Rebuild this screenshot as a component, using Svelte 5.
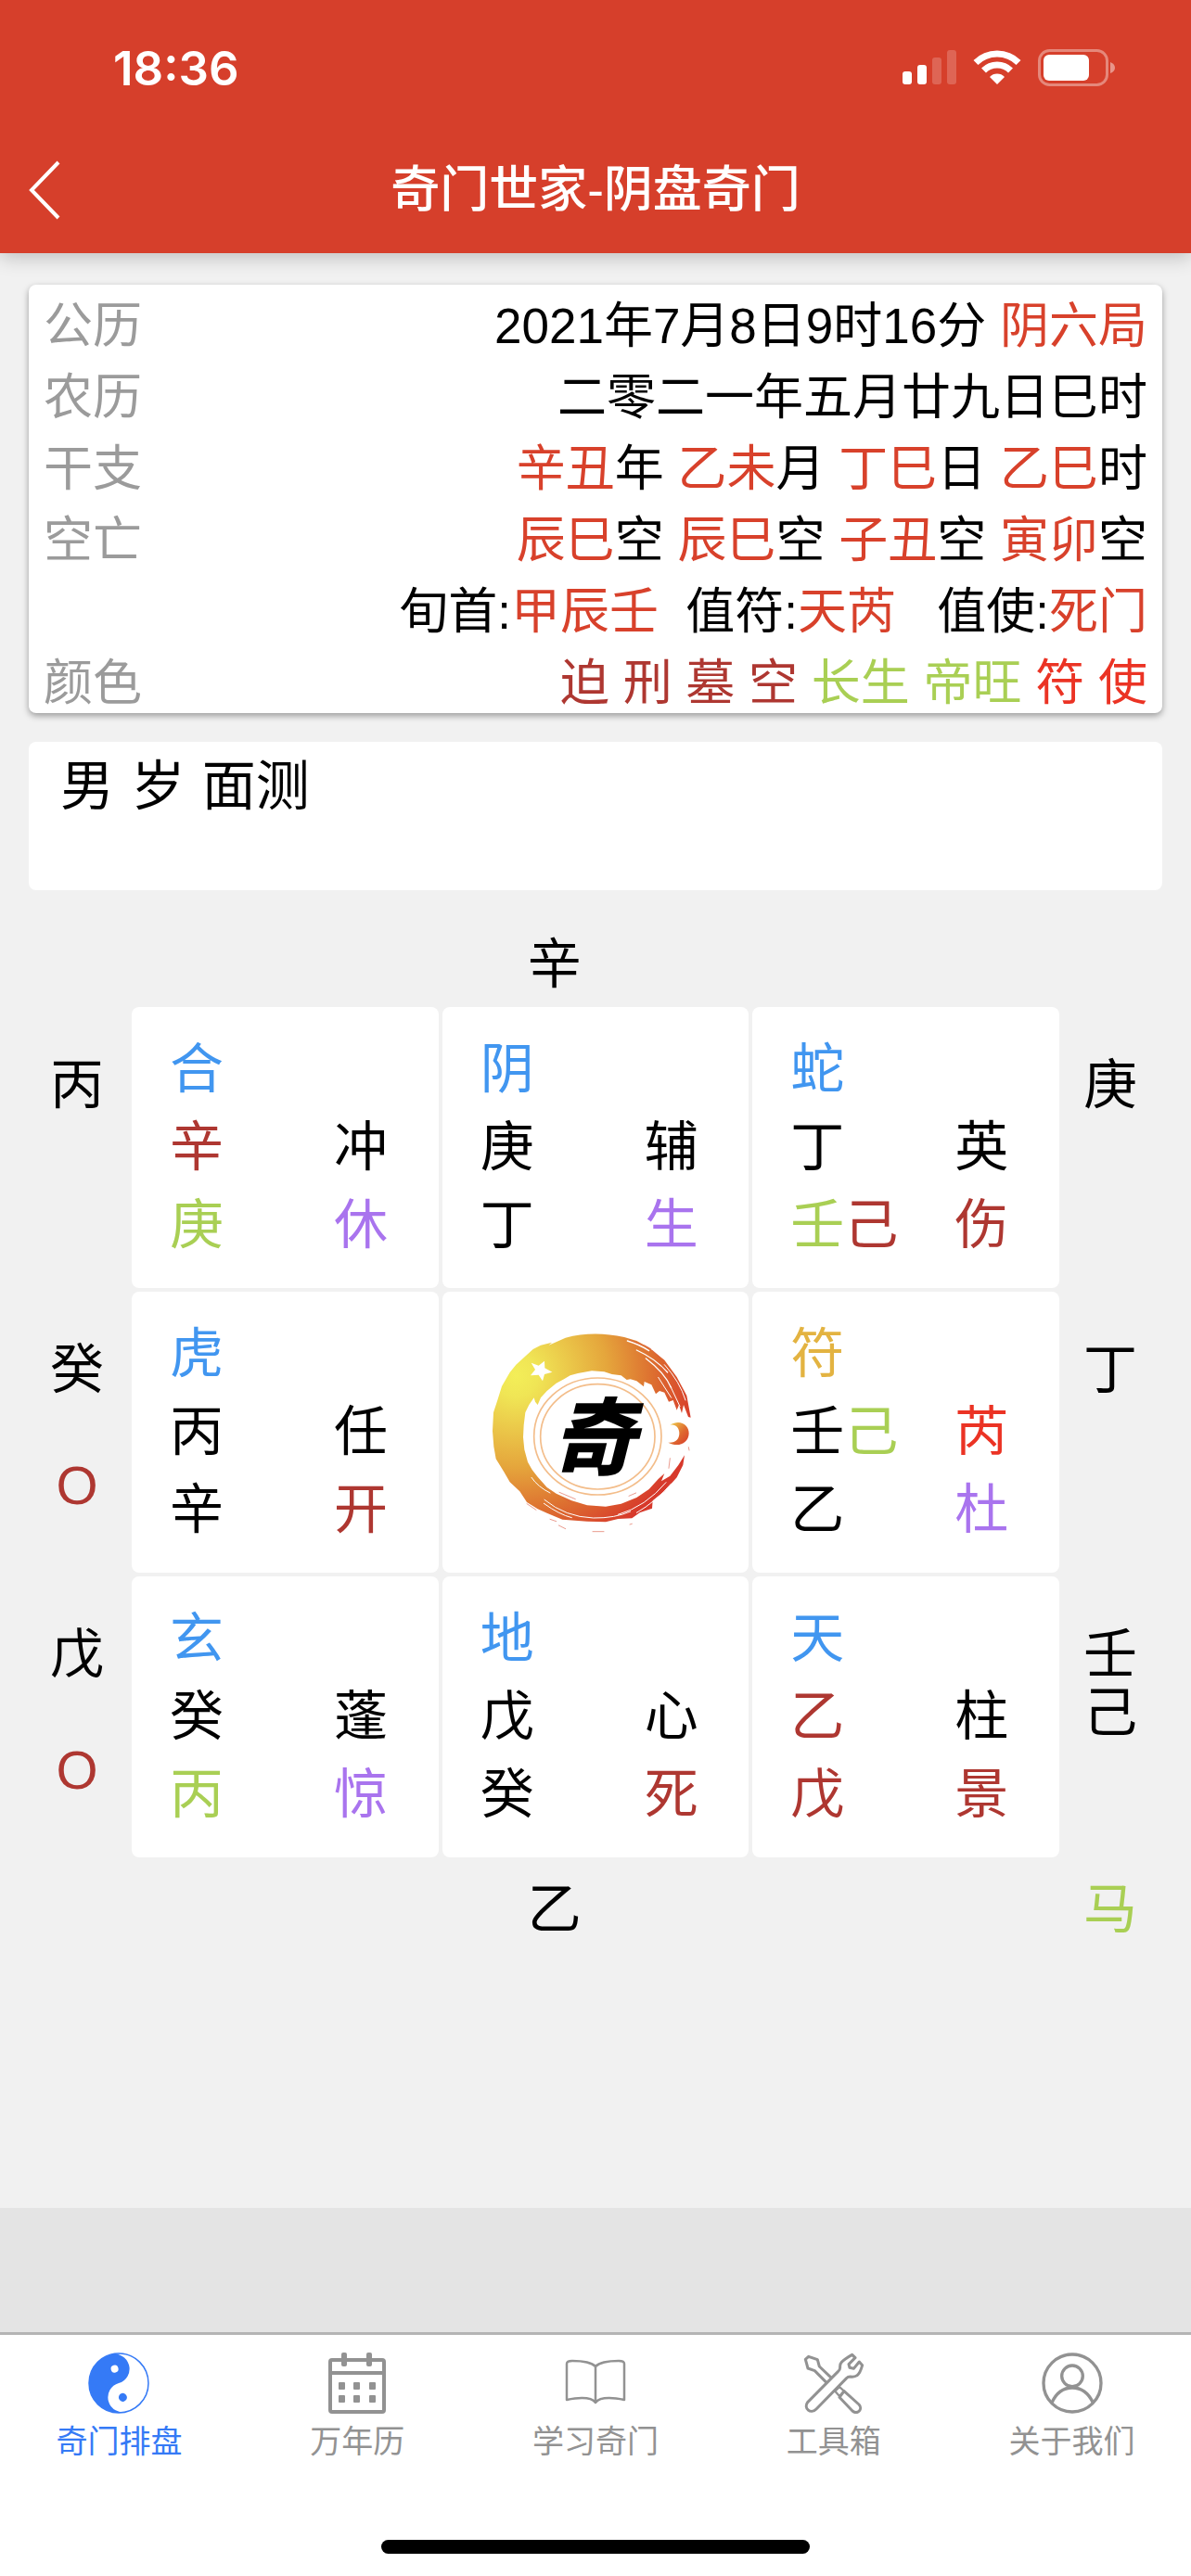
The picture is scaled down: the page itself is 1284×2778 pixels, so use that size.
<script>
  const info = [
    { label: '公历', parts: [['2021年7月8日9时16分 ', ''], ['阴六局', 'accent']] },
    { label: '农历', parts: [['二零二一年五月廿九日巳时', '']] },
    {
      label: '干支',
      parts: [['辛丑', 'accent'], ['年 ', ''], ['乙未', 'accent'], ['月 ', ''], ['丁巳', 'accent'], ['日 ', ''], ['乙巳', 'accent'], ['时', '']]
    },
    {
      label: '空亡',
      parts: [['辰巳', 'accent'], ['空 ', ''], ['辰巳', 'accent'], ['空 ', ''], ['子丑', 'accent'], ['空 ', ''], ['寅卯', 'accent'], ['空', '']]
    },
    {
      label: '',
      parts: [['旬首:', ''], ['甲辰壬', 'accent'], ['  值符:', ''], ['天芮', 'accent'], ['   值使:', ''], ['死门', 'accent']]
    },
    { label: '颜色', parts: [['迫 刑 墓 空 ', 'dark'], ['长生 帝旺 ', 'green'], ['符 使', 'red']] }
  ];

  // Each palace: deity, then heaven stem + star, then earth stem + gate.
  const rows = [
    {
      left: [['丙', '']],
      right: [['庚', '']],
      cells: [
        { god: ['合', 'blue'], sky: [['辛', 'dark']], star: ['冲', ''], earth: [['庚', 'green']], gate: ['休', 'purple'] },
        { god: ['阴', 'blue'], sky: [['庚', '']], star: ['辅', ''], earth: [['丁', '']], gate: ['生', 'purple'] },
        { god: ['蛇', 'blue'], sky: [['丁', '']], star: ['英', ''], earth: [['壬', 'green'], ['己', 'dark']], gate: ['伤', 'dark'] }
      ]
    },
    {
      left: [['癸', '']],
      empty: true,
      right: [['丁', '']],
      cells: [
        { god: ['虎', 'blue'], sky: [['丙', '']], star: ['任', ''], earth: [['辛', '']], gate: ['开', 'dark'] },
        null,
        { god: ['符', 'gold'], sky: [['壬', ''], ['己', 'green']], star: ['芮', 'red'], earth: [['乙', '']], gate: ['杜', 'purple'] }
      ]
    },
    {
      left: [['戊', '']],
      empty: true,
      right: [['壬', ''], ['己', '']],
      cells: [
        { god: ['玄', 'blue'], sky: [['癸', '']], star: ['蓬', ''], earth: [['丙', 'green']], gate: ['惊', 'purple'] },
        { god: ['地', 'blue'], sky: [['戊', '']], star: ['心', ''], earth: [['癸', '']], gate: ['死', 'dark'] },
        { god: ['天', 'blue'], sky: [['乙', 'dark']], star: ['柱', ''], earth: [['戊', 'dark']], gate: ['景', 'dark'] }
      ]
    }
  ];

  const tabs = [
    { id: 'pan', name: '奇门排盘' },
    { id: 'calendar', name: '万年历' },
    { id: 'learn', name: '学习奇门' },
    { id: 'tools', name: '工具箱' },
    { id: 'about', name: '关于我们' }
  ];

  let active = $state('pan');
  let note = $state('男 岁 面测');
</script>

<div class="page">
  <header>
    <div class="status">
      <span class="time">18:36</span>
      <div class="indicators">
        <svg width="58" height="38" viewBox="0 0 58 38" fill="#fff" aria-hidden="true">
          <rect x="0" y="23" width="10" height="14" rx="3" />
          <rect x="16" y="16" width="10" height="21" rx="3" />
          <rect x="32" y="8" width="10" height="29" rx="3" opacity=".2" />
          <rect x="48" y="0" width="10" height="37" rx="3" opacity=".2" />
        </svg>
        <svg width="52" height="38" viewBox="0 0 52 38" aria-hidden="true">
          <g fill="none" stroke="#fff" stroke-width="7">
            <path d="M3 13.500A32.500 32.500 0 0 1 49 13.500" />
            <path d="M11.500 22A20.500 20.500 0 0 1 40.500 22" />
          </g>
          <path d="M26 37L18 29A11 11 0 0 1 34 29Z" fill="#fff" />
        </svg>
        <svg width="83" height="40" viewBox="0 0 83 40" aria-hidden="true">
          <rect x="1.500" y="1.500" width="73" height="37" rx="11" fill="none" stroke="#fff" stroke-width="3" opacity=".38" />
          <rect x="6" y="6" width="49" height="28" rx="6" fill="#fff" />
          <path d="M78 14Q83 16 83 20T78 26Z" fill="#fff" opacity=".45" />
        </svg>
      </div>
    </div>
    <div class="nav">
      <button class="back" aria-label="返回">
        <svg width="34" height="64" viewBox="0 0 34 64" aria-hidden="true">
          <path d="M32 2L3 32L32 62" fill="none" stroke="#fff" stroke-width="4" />
        </svg>
      </button>
      <h1>奇门世家-阴盘奇门</h1>
    </div>
  </header>

  <main>
    <section class="info">
      {#each info as row}
        <div class="line">
          <span class="label">{row.label}</span>
          <span class="value">{#each row.parts as [text, tone]}<span class={tone}>{text}</span>{/each}</span>
        </div>
      {/each}
    </section>

    <textarea class="note" aria-label="备注" bind:value={note}></textarea>

    <section class="board">
      <div class="edge top">辛</div>
      {#each rows as row}
        <div class="side left">
          {#each row.left as [text, tone]}<span class={tone}>{text}</span>{/each}
          {#if row.empty}<span class="void dark">O</span>{/if}
        </div>
        {#each row.cells as cell}
          {#if cell}
            <div class="cell">
              <span class={cell.god[1]}>{cell.god[0]}</span><span></span>
              <span>{#each cell.sky as [text, tone]}<span class={tone}>{text}</span>{/each}</span>
              <span class={cell.star[1]}>{cell.star[0]}</span>
              <span>{#each cell.earth as [text, tone]}<span class={tone}>{text}</span>{/each}</span>
              <span class={cell.gate[1]}>{cell.gate[0]}</span>
            </div>
          {:else}
            <div class="cell center">
              <svg width="280" height="290" viewBox="7 0 840 870" role="img" aria-label="奇门世家">
                <defs>
                  <radialGradient id="sun" gradientUnits="userSpaceOnUse" cx="170" cy="250" r="590">
                    <stop offset="0" stop-color="#f3ee58" />
                    <stop offset=".12" stop-color="#f0e555" />
                    <stop offset=".5" stop-color="#e5a63c" />
                    <stop offset=".75" stop-color="#dd6f30" />
                    <stop offset="1" stop-color="#d7392b" />
                  </radialGradient>
                  <linearGradient id="moon" x1="0" y1="0" x2="1" y2="1">
                    <stop offset="0" stop-color="#f0d84e" />
                    <stop offset=".55" stop-color="#df6b30" />
                    <stop offset="1" stop-color="#d7392b" />
                  </linearGradient>
                </defs>
                <path
                  fill="url(#sun)"
                  d="M225 165L250 152L286 143L276 152L330 128Q420 104 520 126L560 138L600 160L650 200L690 255L722 315L735 386L727 384L712 345L706 372L697 345L690 362L678 330L664 335L650 305L634 300L622 310L608 280L585 270L583 286L560 268L540 262L528 264L510 250L480 246L455 238L415 235L370 243L345 250L325 262L300 275L270 300L250 322L240 345L232 335L228 322L212 345L200 370L195 410L193 450L197 490L208 530L222 555L240 578L270 612L300 632L350 655L400 670L460 674L510 665L560 645L600 618L630 585L650 567L640 592L668 575L695 540L715 508L710 540L690 580L650 625L612 655L610 680L570 694L545 712L500 714L460 724L400 722L320 716L270 695L240 682L205 660L182 625L150 595L130 560L105 520L98 480L94 430L97 370L110 330L124 285L150 240L170 215Z"
                />
                <g fill="none" stroke="#fff" stroke-linecap="round">
                  <path d="M530 138Q570 150 600 170M560 168Q620 195 660 240M590 195Q650 240 672 290" stroke-width="4" />
                  <path d="M650 215Q700 270 718 330M668 282L700 350M630 256L672 322" stroke-width="3" />
                  <path d="M262 652Q330 708 420 711Q490 712 540 690M260 664Q310 700 350 710M560 694Q620 660 672 600M500 700Q590 674 655 596" stroke-width="3" />
                  <path d="M220 580Q240 610 280 630M204 420Q200 480 225 540M212 390Q222 360 232 345" stroke-width="3" />
                </g>
                <g fill="none" stroke="#dc5a45" stroke-linecap="round" opacity=".6">
                  <path d="M310 628L362 650M322 646L350 660M535 640L558 630M418 755L454 755M308 735L330 746M280 715L300 722M538 732L545 730M205 665L235 685M668 518L664 550M728 482L730 492M640 222L652 236M585 152L606 164" stroke-width="3" />
                  <path d="M536 135L580 152M610 168L636 192" stroke-width="3" />
                </g>
                <path fill="#fff" d="M262 203L263 226L287 239L262 246L256 268L243 248L217 250L232 231L219 209L243 218Z" />
                <path fill="url(#moon)" d="M668 410C700 390 730 410 729 438C728 468 695 485 662 467C686 469 699 455 698 435C697 418 686 406 668 410Z" />
                <g fill="#fff" stroke="#f3bd8a" stroke-width="5">
                  <ellipse cx="434" cy="447" rx="206" ry="189" />
                  <ellipse cx="434" cy="448" rx="185" ry="170" />
                </g>
                <text x="422" y="550" text-anchor="middle" class="brush">奇</text>
              </svg>
            </div>
          {/if}
        {/each}
        <div class="side right">
          {#each row.right as [text, tone]}<span class={tone}>{text}</span>{/each}
        </div>
      {/each}
      <div class="edge bottom">乙</div>
      <div class="horse green">马</div>
    </section>
  </main>

  <div class="strip"></div>

  <footer>
    <nav class="tabs">
      {#each tabs as tab}
        <a href={'#' + tab.id} class:active={tab.id === active} onclick={() => (active = tab.id)}>
          {#if tab.id === 'pan'}
            <svg width="66" height="66" viewBox="-33 -33 66 66" aria-hidden="true">
              <circle r="32" fill="#fff" stroke="currentColor" stroke-width="1.500" />
              <g fill="currentColor" transform="rotate(-16)">
                <path d="M0-32A32 32 0 0 0 0 32A16 16 0 0 1 0 0A16 16 0 0 0 0-32Z" />
                <circle cy="-16" r="4" fill="#fff" />
                <circle cy="16" r="4.500" />
              </g>
            </svg>
          {:else if tab.id === 'calendar'}
            <svg width="66" height="66" viewBox="-2 0 66 66" aria-hidden="true">
              <g fill="none" stroke="currentColor" stroke-width="4">
                <rect x="2" y="8" width="58" height="56" rx="2" />
                <path d="M2 22H60" />
              </g>
              <g fill="currentColor">
                <rect x="14" y="0" width="6" height="15" rx="2" />
                <rect x="41" y="0" width="6" height="15" rx="2" />
                <rect x="11" y="32" width="7" height="8" rx="1" />
                <rect x="27" y="32" width="7" height="8" rx="1" />
                <rect x="44" y="32" width="7" height="8" rx="1" />
                <rect x="11" y="46" width="7" height="8" rx="1" />
                <rect x="27" y="46" width="7" height="8" rx="1" />
                <rect x="44" y="46" width="7" height="8" rx="1" />
              </g>
            </svg>
          {:else if tab.id === 'learn'}
            <svg width="66" height="66" viewBox="0 -8 66 66" fill="none" stroke="currentColor" stroke-width="2.500" stroke-linejoin="round" aria-hidden="true">
              <path d="M33 7Q27 1 8 1Q2 1 2 4V43Q27 38 33 46Q39 38 64 43V4Q64 1 58 1Q39 1 33 7V46" />
            </svg>
          {:else if tab.id === 'tools'}
            <svg width="66" height="66" viewBox="256 81 198 198" fill="none" stroke="currentColor" stroke-width="9" stroke-linejoin="round" aria-hidden="true">
              <path d="M270 242L368 143Q375 138 375 130Q374 118 380 112Q386 104 414 88L424 98L403 119L406 130L419 133L437 111L447 122Q440 148 430 155Q422 161 408 159Q400 159 396 164L298 264C280 282 256 262 270 242Z" />
              <path d="M347 163L308 126L302 104L273 94L263 103L271 132L293 140L334 181" />
              <path d="M359 206L373 192L388 206L373 222Z" stroke-width="7" />
              <path d="M388 206L436 249C450 264 432 283 415 270L373 226Z" />
            </svg>
          {:else}
            <svg width="66" height="66" viewBox="1025 81 198 198" fill="none" stroke="currentColor" stroke-width="10" aria-hidden="true">
              <circle cx="1124" cy="180" r="93" />
              <circle cx="1124" cy="157" r="34" />
              <path d="M1058 243Q1080 195 1124 195T1191 243" />
            </svg>
          {/if}
          <span>{tab.name}</span>
        </a>
      {/each}
    </nav>
    <div class="home"></div>
  </footer>
</div>

<style>
  :global(body) {
    margin: 0;
    background: #f1f1f1;
  }

  .page {
    display: flex;
    flex-direction: column;
    min-height: 100vh;
    font-family: 'Liberation Sans', 'Noto Sans CJK SC', sans-serif;
    color: #000;
  }

  header {
    background: #d63f2b;
    color: #fff;
    box-shadow: 0 4px 20px rgba(0, 0, 0, 0.22);
  }

  .status {
    display: flex;
    align-items: center;
    justify-content: space-between;
    height: 90px;
    padding: 28px 82px 18px 122px;
  }

  .time {
    font-family: Inter, sans-serif;
    font-size: 51px;
    font-weight: 600;
  }

  .indicators {
    display: flex;
    align-items: center;
    gap: 18px;
  }

  .nav {
    display: grid;
    grid-template-columns: 96px 1fr 96px;
    align-items: center;
    height: 137px;
  }

  .back {
    display: flex;
    padding: 0 0 0 31px;
    border: 0;
    background: none;
  }

  h1 {
    margin: 0;
    font-size: 53px;
    font-weight: 500;
    line-height: 74px;
    text-align: center;
  }

  main {
    flex: 1;
    padding: 34px 31px 0;
  }

  .info {
    display: flex;
    flex-direction: column;
    gap: 9px;
    padding: 11px 16px 0;
    border-radius: 8px;
    background: #fff;
    box-shadow: 0 3px 7px rgba(0, 0, 0, 0.36);
  }

  .line {
    display: flex;
    justify-content: space-between;
    font-size: 53px;
    line-height: 68px;
  }

  .line:last-child {
    height: 66px;
  }

  .label {
    color: #9b9b9b;
  }

  .value {
    white-space: pre;
  }

  .note {
    display: block;
    box-sizing: border-box;
    width: 100%;
    height: 160px;
    margin: 31px 0 0;
    padding: 12px 34px;
    border: 0;
    border-radius: 8px;
    outline: 0;
    resize: none;
    background: #fff;
    color: inherit;
    font-family: 'DejaVu Sans', 'Noto Sans CJK SC', sans-serif;
    font-size: 58px;
    line-height: 72px;
  }

  .board {
    display: grid;
    grid-template-columns: 138px repeat(3, 1fr) 138px;
    grid-template-rows: 122px repeat(3, 303px) 110px;
    gap: 4px;
    margin: 0 -31px;
    font-size: 58px;
    line-height: 84px;
  }

  .edge {
    grid-column: 3;
    padding-left: 92px;
  }

  .top {
    padding-top: 38px;
  }

  .bottom,
  .horse {
    padding-top: 10px;
  }

  .horse {
    grid-column: 5;
    padding-left: 22px;
  }

  .side {
    display: flex;
    flex-direction: column;
    padding-top: 52px;
    line-height: 63px;
  }

  .left {
    grid-column: 1;
    padding-left: 54px;
  }

  .right {
    padding-left: 22px;
  }

  .void {
    width: 58px;
    padding-top: 62px;
    text-align: center;
  }

  .cell {
    display: grid;
    grid-template-columns: 11fr 7fr;
    grid-auto-rows: 84px;
    align-content: center;
    padding: 0 0 2px 41px;
    border-radius: 8px;
    background: #fff;
  }

  .center {
    display: flex;
    align-items: center;
    justify-content: center;
    padding: 0;
  }

  .brush {
    font-family: 'Noto Sans CJK SC', sans-serif;
    font-size: 270px;
    font-style: italic;
    font-weight: 900;
  }

  .accent { color: #d8412b; }
  .dark { color: #ae3731; }
  .green { color: #a9cf54; }
  .red { color: #eb3324; }
  .blue { color: #4196f0; }
  .purple { color: #a974ee; }
  .gold { color: #e3b341; }

  .strip {
    height: 134px;
    background: #e4e4e4;
  }

  footer {
    display: flex;
    flex-direction: column;
    align-items: center;
    justify-content: space-between;
    height: 236px;
    padding-bottom: 24px;
    border-top: 3px solid #b4b4b4;
    background: #fff;
  }

  .tabs {
    display: grid;
    grid-template-columns: repeat(5, 1fr);
    width: 100%;
    padding-top: 19px;
  }

  .tabs a {
    display: flex;
    flex-direction: column;
    align-items: center;
    gap: 6px;
    color: #929292;
    font-size: 34px;
    line-height: 48px;
    text-decoration: none;
  }

  .tabs a.active {
    color: #357af6;
  }

  .home {
    width: 36%;
    height: 15px;
    border-radius: 8px;
    background: #000;
  }
</style>
